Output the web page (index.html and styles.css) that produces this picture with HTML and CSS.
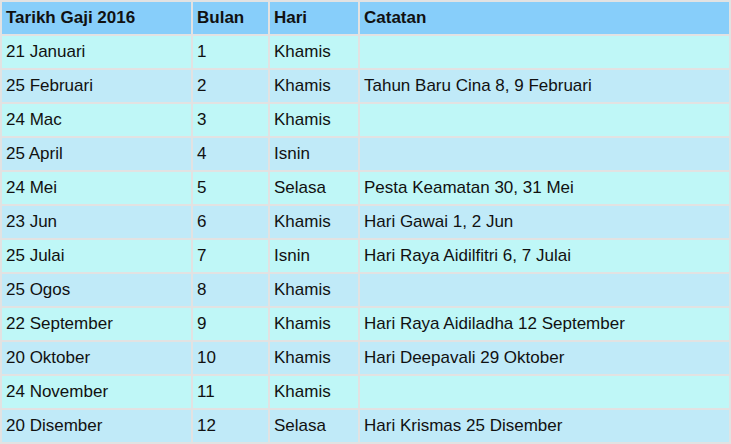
FILE: index.html
```
<!DOCTYPE html>
<html>
<head>
<meta charset="utf-8">
<link rel="stylesheet" href="styles.css">
</head>
<body>
<table class="gaji">
  <colgroup>
    <col class="c1"><col class="c2"><col class="c3"><col class="c4">
  </colgroup>
  <thead>
    <tr><th>Tarikh Gaji 2016</th><th>Bulan</th><th>Hari</th><th>Catatan</th></tr>
  </thead>
  <tbody>
    <tr><td>21 Januari</td><td>1</td><td>Khamis</td><td></td></tr>
    <tr><td>25 Februari</td><td>2</td><td>Khamis</td><td>Tahun Baru Cina 8, 9 Februari</td></tr>
    <tr><td>24 Mac</td><td>3</td><td>Khamis</td><td></td></tr>
    <tr><td>25 April</td><td>4</td><td>Isnin</td><td></td></tr>
    <tr><td>24 Mei</td><td>5</td><td>Selasa</td><td>Pesta Keamatan 30, 31 Mei</td></tr>
    <tr><td>23 Jun</td><td>6</td><td>Khamis</td><td>Hari Gawai 1, 2 Jun</td></tr>
    <tr><td>25 Julai</td><td>7</td><td>Isnin</td><td>Hari Raya Aidilfitri 6, 7 Julai</td></tr>
    <tr><td>25 Ogos</td><td>8</td><td>Khamis</td><td></td></tr>
    <tr><td>22 September</td><td>9</td><td>Khamis</td><td>Hari Raya Aidiladha 12 September</td></tr>
    <tr><td>20 Oktober</td><td>10</td><td>Khamis</td><td>Hari Deepavali 29 Oktober</td></tr>
    <tr><td>24 November</td><td>11</td><td>Khamis</td><td></td></tr>
    <tr><td>20 Disember</td><td>12</td><td>Selasa</td><td>Hari Krismas 25 Disember</td></tr>
  </tbody>
</table>
</body>
</html>
```
FILE: styles.css
```
html, body {
  margin: 0;
  padding: 0;
  background: #ffffff;
}
.gaji {
  border-collapse: collapse;
  table-layout: fixed;
  width: 731px;
  font-family: "Liberation Sans", Arial, sans-serif;
  font-size: 17px;
  color: #111111;
}
.c1 { width: 191px; }
.c2 { width: 77px; }
.c3 { width: 90px; }
.c4 { width: auto; }
.gaji th,
.gaji td {
  border: 2px solid #e2e2e2;
  height: 34px;
  padding: 0 4px;
  text-align: left;
  vertical-align: middle;
  box-sizing: border-box;
}
.gaji th {
  background: #87cefa;
  font-weight: bold;
}
.gaji tbody tr:nth-child(odd) td {
  background: #bff7f7;
}
.gaji tbody tr:nth-child(even) td {
  background: #c0eaf8;
}
```
